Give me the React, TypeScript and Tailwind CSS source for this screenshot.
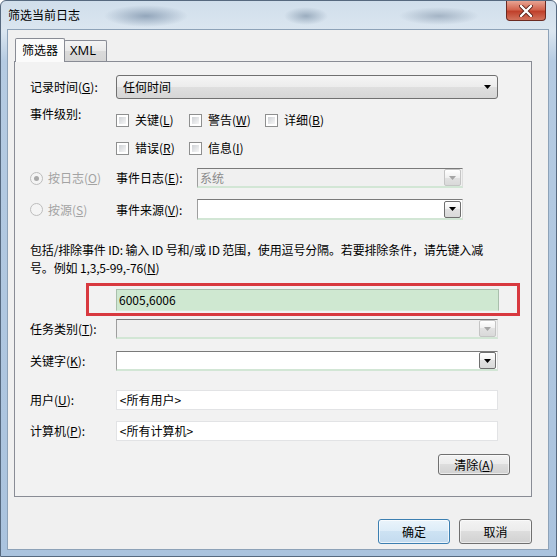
import React from "react";

const font = { fontFamily: '"Noto Sans CJK SC", "Microsoft YaHei", "Liberation Sans", sans-serif' };

function Arrow({ disabled = false }: { disabled?: boolean }) {
  return (
    <svg width="7" height="4" viewBox="0 0 7 4">
      <path d="M0 0 H7 L3.5 4 Z" fill={disabled ? "#a5a5a5" : "#000"} />
    </svg>
  );
}

function DropButton({ disabled = false }: { disabled?: boolean }) {
  return (
    <div
      className={`w-[17px] h-[17px] rounded-[2px] border flex items-center justify-center bg-[linear-gradient(#ffffff,#f0f0f0_50%,#e2e2e2_50%,#d9d9d9)] ${
        disabled ? "border-[#c4c4c4]" : "border-[#6f6f6f]"
      }`}
    >
      <Arrow disabled={disabled} />
    </div>
  );
}

function Box({
  children,
  className = "",
}: {
  children?: React.ReactNode;
  className?: string;
}) {
  return (
    <div
      className={`flex items-center border-t border-l border-r border-b-2 border-t-[#7a7a7a] border-l-[#9e9e9e] border-r-[#dedede] border-b-[#d2e6d5] ${className}`}
    >
      {children}
    </div>
  );
}

function Checkbox({ label, k, w }: { label: string; k: string; w: string }) {
  return (
    <div className={`flex items-center ${w}`}>
      <div className="w-[13px] h-[13px] border border-[#8e8f8f] bg-white p-[2px]">
        <div className="w-full h-full bg-gradient-to-br from-[#cfd2d6] to-[#f7f7f7]" />
      </div>
      <span className="ml-[6px]">
        {label}(<u>{k}</u>)
      </span>
    </div>
  );
}

function Radio({ label, k, checked }: { label: string; k: string; checked?: boolean }) {
  return (
    <div className="flex items-center w-[86px] text-[#a3a3a3]">
      <div className="w-[13px] h-[13px] rounded-full border border-[#bdbdbd] bg-[#f4f4f4] flex items-center justify-center">
        {checked && <div className="w-[5px] h-[5px] rounded-full bg-[#a9a9a9]" />}
      </div>
      <span className="ml-[5px]">
        {label}(<u>{k}</u>)
      </span>
    </div>
  );
}

function WinButton({
  children,
  className = "",
  primary = false,
}: {
  children: React.ReactNode;
  className?: string;
  primary?: boolean;
}) {
  return (
    <div
      className={`flex items-center justify-center rounded-[3px] border ${
        primary
          ? "border-[#3c7fb1] bg-[linear-gradient(#eaf4fb,#dcecf8_50%,#cde2f3_50%,#c3dbef)] shadow-[inset_0_0_0_1px_#ffffffb0]"
          : "border-[#707070] bg-[linear-gradient(#f3f3f3,#ebebeb_50%,#dddddd_50%,#d1d1d1)] shadow-[inset_0_0_0_1px_#ffffff90]"
      } ${className}`}
    >
      {children}
    </div>
  );
}

export default function App() {
  return (
    <div
      className="relative w-[557px] h-[557px] overflow-hidden flex flex-col text-[12px] text-black rounded-t-[6px] border border-[#56697f] bg-[radial-gradient(42px_11px_at_145px_15px,#93a6bb,transparent),radial-gradient(22px_9px_at_305px_15px,#9badbf,transparent),radial-gradient(40px_9px_at_438px_15px,#a4b4c5,transparent),linear-gradient(#d0deeb,#dbe6f0_30px,#b5cbe2_60px,#aac3de)]"
      style={font}
    >
      {/* Title bar */}
      <div className="h-[28px] flex items-start shrink-0">
        <span className="ml-[7px] mt-[5px] leading-[18px]">筛选当前日志</span>
        <div className="ml-auto mr-[10px] w-[40px] h-[20px] rounded-b-[4px] border border-t-0 border-[#6b2a22] bg-[linear-gradient(#e8a493,#d3654f_45%,#c0412c_55%,#d2735d)] flex items-center justify-center">
          <svg width="14" height="12" viewBox="0 0 14 12">
            <path d="M2 1 L12 11 M12 1 L2 11" stroke="#5b2018" strokeWidth="4" strokeLinecap="round" />
            <path d="M2 1 L12 11 M12 1 L2 11" stroke="#ffffff" strokeWidth="2.4" strokeLinecap="round" />
          </svg>
        </div>
      </div>

      <div className="flex flex-1">
        {/* Client area */}
        <div className="ml-[6px] mb-[6px] w-[542px] shrink-0 bg-[#f0f0f0] border border-[#8da2b8] flex flex-col pl-[6px] pt-[7px]">
          {/* Tabs */}
          <div className="flex items-end h-[24px] ml-[1px]">
            <div className="relative z-10 -mb-px h-[24px] w-[50px] bg-[#fbfbfb] border border-b-0 border-[#898c95] rounded-t-[2px] flex items-center pl-[6px] pb-[2px]">
              筛选器
            </div>
            <div className="h-[21px] w-[43px] -ml-px bg-[linear-gradient(#f4f4f4,#e9e9e9_50%,#dadada_50%,#d5d5d5)] border border-b-0 border-[#898c95] rounded-t-[2px] flex items-center pl-[5px] text-[13px]" style={{ fontFamily: '"Open Sans", "Liberation Sans", sans-serif' }}>
              XML
            </div>
          </div>

          {/* Panel */}
          <div className="w-[518px] h-[436px] border border-[#898c95] bg-[#f2f2f2] flex flex-col pl-[15px] pr-[33px] overflow-visible">
            {/* 记录时间 */}
            <div className="mt-[13px] h-[24px] flex items-center">
              <span className="w-[86px]">
                记录时间(<u>G</u>):
              </span>
              <div className="w-[382px] h-[24px] rounded-[3px] border border-[#707070] bg-[linear-gradient(#f5f5f5,#ececec_50%,#dfdfdf_50%,#d6d6d6)] flex items-center pl-[6px] pr-[6px]">
                <span>任何时间</span>
                <div className="ml-auto">
                  <Arrow />
                </div>
              </div>
            </div>

            {/* 事件级别 */}
            <div className="mt-[6px] flex">
              <span className="w-[86px] leading-[18px]">事件级别:</span>
              <div className="flex flex-col">
                <div className="mt-[6px] h-[18px] flex items-center">
                  <Checkbox label="关键" k="L" w="w-[73px]" />
                  <Checkbox label="警告" k="W" w="w-[76px]" />
                  <Checkbox label="详细" k="B" w="w-[80px]" />
                </div>
                <div className="mt-[10px] h-[18px] flex items-center">
                  <Checkbox label="错误" k="R" w="w-[73px]" />
                  <Checkbox label="信息" k="I" w="w-[76px]" />
                </div>
              </div>
            </div>

            {/* 按日志 */}
            <div className="mt-[11px] h-[20px] flex items-center">
              <Radio label="按日志" k="O" checked />
              <span className="w-[81px]">
                事件日志(<u>E</u>):
              </span>
              <Box className="w-[266px] h-[20px] bg-[#f0f0f0] pl-[2px] pr-[1px]">
                <span className="text-[#8a8a8a]">系统</span>
                <div className="ml-auto">
                  <DropButton disabled />
                </div>
              </Box>
            </div>

            {/* 按源 */}
            <div className="mt-[11px] h-[21px] flex items-center">
              <Radio label="按源" k="S" />
              <span className="w-[81px]">
                事件来源(<u>V</u>):
              </span>
              <Box className="w-[266px] h-[21px] bg-white pr-[1px]">
                <div className="ml-auto">
                  <DropButton />
                </div>
              </Box>
            </div>

            {/* 说明 */}
            <p className="mt-[21px] leading-[18px] whitespace-nowrap tracking-[-0.15px]">
              包括/排除事件 ID: 输入 ID 号和/或 ID 范围，使用逗号分隔。若要排除条件，请先键入减
              <br />
              号。例如 1,3,5-99,-76(<u>N</u>)
            </p>

            {/* ID 输入 */}
            <div className="mt-[6px] ml-[56px] w-[434px] h-[33px] border-[3px] border-[#d8393f] flex items-center pl-[27px]">
              <div className="w-[383px] h-[22px] bg-[#cfe8d1] border-t border-l border-r border-[#a9bfac] border-b border-b-[#d8ecd9] flex items-center pl-[2px]">
                6005,6006
              </div>
            </div>

            {/* 任务类别 */}
            <div className="mt-[3px] h-[20px] flex items-center">
              <span className="w-[86px]">
                任务类别(<u>T</u>):
              </span>
              <Box className="w-[382px] h-[20px] bg-[#efefef] pr-[1px]">
                <div className="ml-auto">
                  <DropButton disabled />
                </div>
              </Box>
            </div>

            {/* 关键字 */}
            <div className="mt-[12px] h-[20px] flex items-center">
              <span className="w-[86px]">
                关键字(<u>K</u>):
              </span>
              <Box className="w-[382px] h-[20px] bg-white pr-[1px]">
                <div className="ml-auto">
                  <DropButton />
                </div>
              </Box>
            </div>

            {/* 用户 */}
            <div className="mt-[19px] h-[20px] flex items-center">
              <span className="w-[86px]">
                用户(<u>U</u>):
              </span>
              <div className="w-[383px] h-[20px] bg-white border border-[#e2e3e5] flex items-center pl-[3px]">
                &lt;所有用户&gt;
              </div>
            </div>

            {/* 计算机 */}
            <div className="mt-[11px] h-[20px] flex items-center">
              <span className="w-[86px]">
                计算机(<u>P</u>):
              </span>
              <div className="w-[383px] h-[20px] bg-white border border-[#e2e3e5] flex items-center pl-[3px]">
                &lt;所有计算机&gt;
              </div>
            </div>

            <div className="mt-[13px] flex justify-end -mr-[12px]">
              <WinButton className="w-[72px] h-[21px]">
                清除(<u>A</u>)
              </WinButton>
            </div>
          </div>

          {/* Bottom buttons */}
          <div className="mt-[22px] w-[518px] flex justify-end gap-[9px]">
            <WinButton primary className="w-[72px] h-[25px]">
              确定
            </WinButton>
            <WinButton className="w-[73px] h-[25px]">取消</WinButton>
          </div>
        </div>
      </div>
    </div>
  );
}
